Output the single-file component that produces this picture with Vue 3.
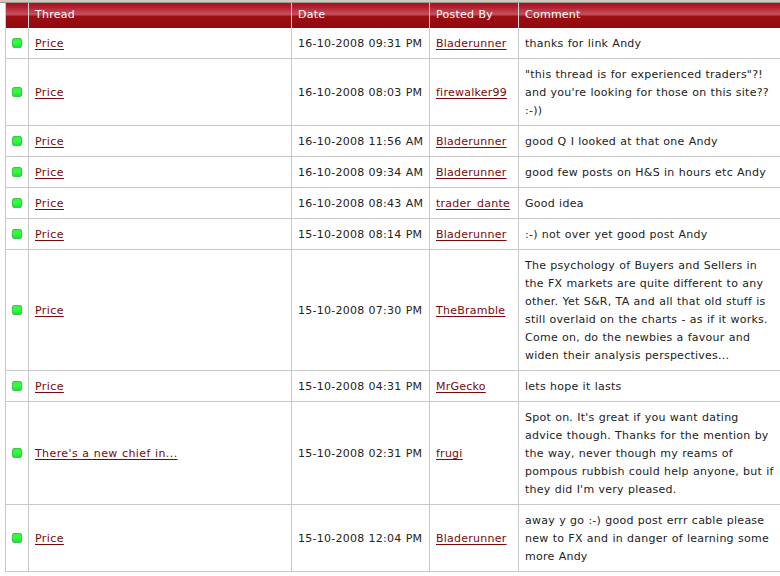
<script setup>
const rows = [
  { t: 'Price', d: '16-10-2008 09:31 PM', u: 'Bladerunner', c: ['thanks for link Andy'] },
  { t: 'Price', d: '16-10-2008 08:03 PM', u: 'firewalker99', c: ['"this thread is for experienced traders"?!', "and you're looking for those on this site??", ':-))'] },
  { t: 'Price', d: '16-10-2008 11:56 AM', u: 'Bladerunner', c: ['good Q I looked at that one Andy'] },
  { t: 'Price', d: '16-10-2008 09:34 AM', u: 'Bladerunner', c: ['good few posts on H&S in hours etc Andy'] },
  { t: 'Price', d: '16-10-2008 08:43 AM', u: 'trader_dante', c: ['Good idea'] },
  { t: 'Price', d: '15-10-2008 08:14 PM', u: 'Bladerunner', c: [':-) not over yet good post Andy'] },
  { t: 'Price', d: '15-10-2008 07:30 PM', u: 'TheBramble', c: ['The psychology of Buyers and Sellers in', 'the FX markets are quite different to any', 'other. Yet S&R, TA and all that old stuff is', 'still overlaid on the charts - as if it works.', 'Come on, do the newbies a favour and', 'widen their analysis perspectives...'] },
  { t: 'Price', d: '15-10-2008 04:31 PM', u: 'MrGecko', c: ['lets hope it lasts'] },
  { t: "There's a new chief in...", d: '15-10-2008 02:31 PM', u: 'frugi', c: ["Spot on. It's great if you want dating", 'advice though. Thanks for the mention by', 'the way, never though my reams of', 'pompous rubbish could help anyone, but if', "they did I'm very pleased."] },
  { t: 'Price', d: '15-10-2008 12:04 PM', u: 'Bladerunner', c: ['away y go :-) good post errr cable please', 'new to FX and in danger of learning some', 'more Andy'] },
]
</script>

<template>
  <div class="page">
    <table class="grid">
      <colgroup>
        <col class="c0" /><col class="c1" /><col class="c2" /><col class="c3" /><col class="c4" />
      </colgroup>
      <thead>
        <tr>
          <th></th><th>Thread</th><th>Date</th><th>Posted By</th><th>Comment</th>
        </tr>
      </thead>
      <tbody>
        <tr v-for="(r, i) in rows" :key="i">
          <td class="dotcell"><span class="dot"></span></td>
          <td class="thread"><a class="lnk">{{ r.t }}</a></td>
          <td class="date">{{ r.d }}</td>
          <td><a class="lnk">{{ r.u }}</a></td>
          <td class="cm"><div v-for="(l, j) in r.c" :key="j">{{ l }}</div></td>
        </tr>
      </tbody>
    </table>
  </div>
</template>

<style>
html, body { margin: 0; background: #fff; overflow: hidden; }
</style>

<style scoped>
.page {
  width: 780px;
  height: 576px;
  overflow: hidden;
  box-sizing: border-box;
  padding: 3px 0 0 5px;
  background: linear-gradient(#d2c9ba 0, #d2c9ba 2px, #9a9a94 2px, #9a9a94 3px, #fff 3px);
  font-family: "DejaVu Sans", sans-serif;
  font-size: 11px;
  letter-spacing: 0.25px;
  word-spacing: 0.4px;
  color: #222;
}
.grid {
  border-collapse: separate;
  border-spacing: 0;
  table-layout: fixed;
  width: 800px;
  background: #fff;
}
.c0 { width: 23px; }
.c1 { width: 263px; }
.c2 { width: 138px; }
.c3 { width: 89px; }
.c4 { width: 287px; }
th {
  box-sizing: border-box;
  height: 25px;
  padding: 0 6px 2px;
  text-align: left;
  font-weight: 400;
  color: #fff;
  background: linear-gradient(#ad1020 0, #b01828 3px, #c4505c 11px, #c04a56 12px, #9e0e14 13px, #8e0a0e 25px);
  border-left: 1px solid #d4d8d8;
}
th:first-child { border-left: 1px solid #c8c8c8; }
td {
  padding: 7px 6px 5px;
  border-left: 1px solid #c8c8c8;
  border-bottom: 1px solid #c8c8c8;
  vertical-align: middle;
  line-height: 18px;
  white-space: nowrap;
}
.dotcell { padding: 0; }
.dot {
  display: block;
  box-sizing: border-box;
  width: 10px;
  height: 10px;
  margin: 0 0 0 6px;
  border-radius: 2px;
  background: linear-gradient(#3cf03c, #30ff40 50%, #20e030);
  border: 1px solid #3cc848;
}
.thread { letter-spacing: 0.4px; }
.lnk { color: #7a0808; text-decoration: underline; text-underline-offset: 2px; }
</style>
